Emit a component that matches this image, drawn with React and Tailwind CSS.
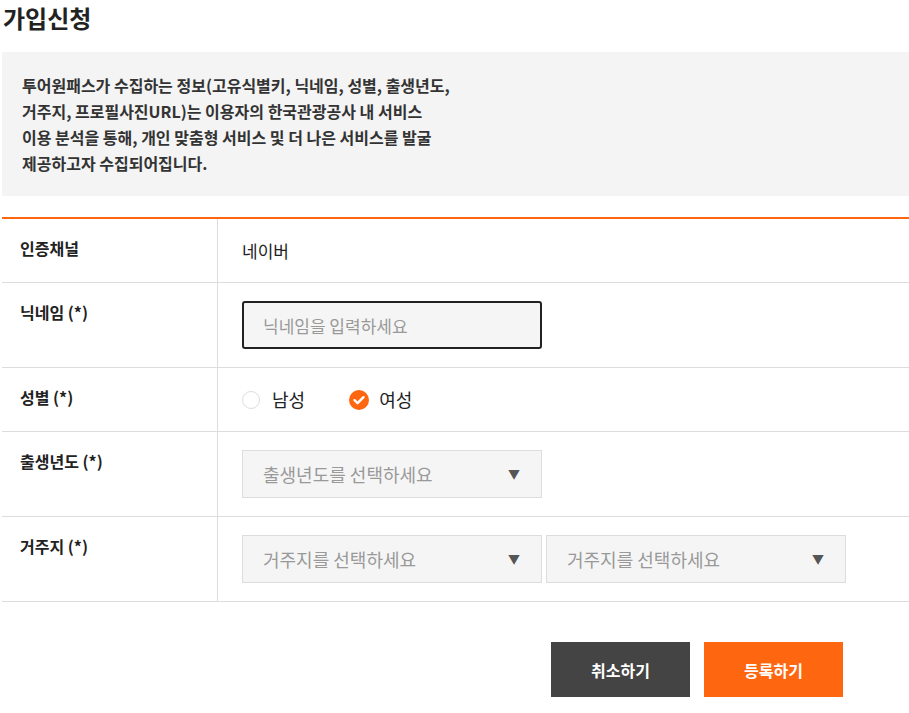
import { useState } from "react";

const font = { fontFamily: '"Noto Sans CJK KR", "Noto Sans", sans-serif' };

function Row({ label, children, tall }) {
  return (
    <div className="grid grid-cols-[216px_1fr] border-b border-[#dddddd]">
      <div className="border-r border-[#dddddd] pl-[18px] pt-[19px] text-[16px] font-bold leading-[20px] text-[#222]">
        {label}
      </div>
      <div className={"pl-[24px] py-[18px] flex items-center gap-[4px] " + (tall ? "min-h-[84px]" : "min-h-[63px]")}>
        {children}
      </div>
    </div>
  );
}

function Select({ text }) {
  return (
    <div className="w-[300px] h-[48px] border border-[#dddddd] bg-[#f5f5f5] pl-[20px] pr-[21px] flex items-center justify-between text-[18px] text-[#999]">
      <span>{text}</span>
      <span className="text-[12px] text-[#555]">▼</span>
    </div>
  );
}

export default function App() {
  const [gender, setGender] = useState("f");

  return (
    <div className="bg-white min-h-screen pl-[2px] text-[#222]" style={font}>
      <h1 className="text-[24px] font-bold leading-[36px] pl-[1px]">가입신청</h1>

      <div className="mt-[16px] bg-[#f4f4f4] px-5 py-5 text-[16px] font-semibold leading-[26px] text-[#333]">
        투어원패스가 수집하는 정보(고유식별키, 닉네임, 성별, 출생년도,
        <br />
        거주지, 프로필사진URL)는 이용자의 한국관광공사 내 서비스
        <br />
        이용 분석을 통해, 개인 맞춤형 서비스 및 더 나은 서비스를 발굴
        <br />
        제공하고자 수집되어집니다.
      </div>

      <div className="mt-[21px] border-t-2 border-[#ff6610]">
        <Row label="인증채널">
          <span className="text-[17px] leading-[27px] text-[#222]">네이버</span>
        </Row>
        <Row label="닉네임 (*)" tall>
          <input
            type="text"
            placeholder="닉네임을 입력하세요"
            className="w-[300px] h-[48px] border-2 border-[#222] rounded-[3px] bg-[#f5f5f5] px-[19px] text-[17px] placeholder:text-[#999] outline-none"
          />
        </Row>
        <Row label="성별 (*)">
          <div className="flex items-center h-[27px]">
            <button className="flex items-center" onClick={() => setGender("m")}>
              {gender === "m" ? (
                <Checked />
              ) : (
                <span className="w-[18px] h-[18px] rounded-full border border-[#dddddd] bg-white" />
              )}
              <span className="ml-[12px] text-[18px] text-[#222]">남성</span>
            </button>
            <button className="flex items-center ml-[44px]" onClick={() => setGender("f")}>
              {gender === "f" ? (
                <Checked />
              ) : (
                <span className="w-[18px] h-[18px] rounded-full border border-[#dddddd] bg-white" />
              )}
              <span className="ml-[10px] text-[18px] text-[#222]">여성</span>
            </button>
          </div>
        </Row>
        <Row label="출생년도 (*)" tall>
          <Select text="출생년도를 선택하세요" />
        </Row>
        <Row label="거주지 (*)" tall>
          <Select text="거주지를 선택하세요" />
          <Select text="거주지를 선택하세요" />
        </Row>
      </div>

      <div className="mt-[40px] flex gap-[14px] pl-[549px]">
        <button className="w-[139px] h-[55px] bg-[#444] text-white text-[16px] font-bold">
          취소하기
        </button>
        <button className="w-[139px] h-[55px] bg-[#ff6610] text-white text-[16px] font-bold">
          등록하기
        </button>
      </div>
    </div>
  );
}

function Checked() {
  return (
    <svg width="20" height="20" viewBox="0 0 20 20">
      <circle cx="10" cy="10" r="10" fill="#ff6610" />
      <path d="M5.5 10.2 L8.6 13.2 L14.5 7.2" fill="none" stroke="#fff" strokeWidth="2.4" strokeLinecap="round" strokeLinejoin="round" />
    </svg>
  );
}
